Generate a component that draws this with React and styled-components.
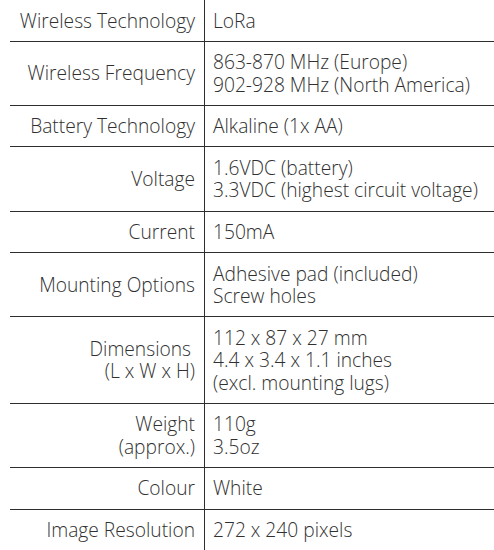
import styled, { createGlobalStyle } from "styled-components";

const GlobalStyle = createGlobalStyle`
  html, body {
    margin: 0;
    padding: 0;
    background: #ffffff;
  }
  body {
    font-family: "Open Sans", "Liberation Sans", sans-serif;
  }
`;

const SpecTable = styled.table`
  border-collapse: collapse;
  table-layout: fixed;
  margin: 0 0 0 10px;
  width: 484px;
  color: #303030;
  font-size: 19.2px;
  font-weight: 300;
  line-height: 22.4px;
`;

const Row = styled.tr`
  & + & > td {
    border-top: 1px solid #2e2e2e;
  }
`;

const Label = styled.td`
  width: 185px;
  padding: 9.5px 9px 8.8px 0;
  text-align: right;
  vertical-align: middle;
  white-space: nowrap;
`;

const Value = styled.td`
  padding: 9.5px 0 8.8px 8px;
  border-left: 1px solid #2e2e2e;
  text-align: left;
  vertical-align: middle;
  white-space: nowrap;
`;

const Line = styled.div`
  height: 22.4px;
  padding-right: ${(p) => (p.$indent ? "4px" : "0")};
`;

const specs = [
  { label: ["Wireless Technology"], value: ["LoRa"] },
  {
    label: ["Wireless Frequency"],
    value: ["863-870 MHz (Europe)", "902-928 MHz (North America)"],
  },
  { label: ["Battery Technology"], value: ["Alkaline (1x AA)"] },
  {
    label: ["Voltage"],
    value: ["1.6VDC (battery)", "3.3VDC (highest circuit voltage)"],
  },
  { label: ["Current"], value: ["150mA"] },
  {
    label: ["Mounting Options"],
    value: ["Adhesive pad (included)", "Screw holes"],
  },
  {
    label: ["Dimensions", "(L x W x H)"],
    indentFirst: true,
    value: ["112 x 87 x 27 mm", "4.4 x 3.4 x 1.1 inches", "(excl. mounting lugs)"],
  },
  { label: ["Weight", "(approx.)"], value: ["110g", "3.5oz"] },
  { label: ["Colour"], value: ["White"] },
  { label: ["Image Resolution"], value: ["272 x 240 pixels"] },
];

const Lines = ({ items, indentFirst }) =>
  items.map((t, i) => (
    <Line key={i} $indent={indentFirst && i === 0}>
      {t}
    </Line>
  ));

export default function App() {
  return (
    <>
      <GlobalStyle />
      <SpecTable>
        <tbody>
          {specs.map((s) => (
            <Row key={s.label[0]}>
              <Label>
                <Lines items={s.label} indentFirst={s.indentFirst} />
              </Label>
              <Value>
                <Lines items={s.value} />
              </Value>
            </Row>
          ))}
        </tbody>
      </SpecTable>
    </>
  );
}
